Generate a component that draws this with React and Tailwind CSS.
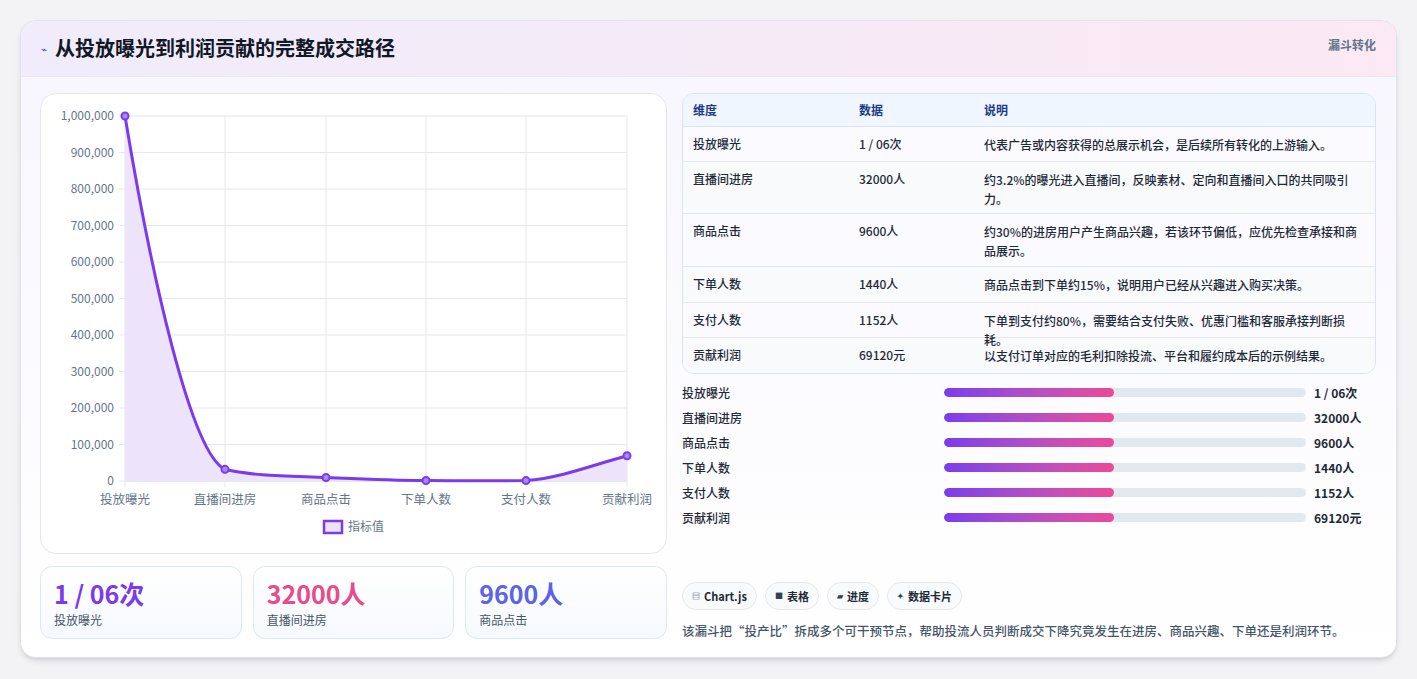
import React from "react";

const rows = [
  ["投放曝光", "1 / 06次", "代表广告或内容获得的总展示机会，是后续所有转化的上游输入。", "h-[35px]"],
  ["直播间进房", "32000人", "约3.2%的曝光进入直播间，反映素材、定向和直播间入口的共同吸引力。", "h-[52px]"],
  ["商品点击", "9600人", "约30%的进房用户产生商品兴趣，若该环节偏低，应优先检查承接和商品展示。", "h-[53px]"],
  ["下单人数", "1440人", "商品点击到下单约15%，说明用户已经从兴趣进入购买决策。", "h-[36px]"],
  ["支付人数", "1152人", "下单到支付约80%，需要结合支付失败、优惠门槛和客服承接判断损耗。", "h-[35px]"],
  ["贡献利润", "69120元", "以支付订单对应的毛利扣除投流、平台和履约成本后的示例结果。", "h-[35px]"],
];

const xs = [84, 184, 285, 385, 485, 586];
const vals = [1000000, 32000, 9600, 1440, 1152, 69120];
const ys = vals.map((v) => 387 - (v / 1e6) * 365);

function Chart() {
  const yl = ["1,000,000", "900,000", "800,000", "700,000", "600,000", "500,000", "400,000", "300,000", "200,000", "100,000", "0"];
  const labels = ["投放曝光", "直播间进房", "商品点击", "下单人数", "支付人数", "贡献利润"];
  const line = `M84,${ys[0]} C110,180 150,360 184,${ys[1]} C210,382 250,382 285,${ys[2]} C320,385 350,386.5 385,${ys[3]} C420,387 450,387 485,${ys[4]} C520,384 555,370 586,${ys[5]}`;
  return (
    <svg width="627" height="461" className="block" style={{ fontFamily: "'Noto Sans CJK SC', sans-serif" }}>
      {yl.map((t, i) => {
        const y = 22 + i * 36.5;
        return (
          <g key={i}>
            <line x1="84" x2="586" y1={y} y2={y} stroke={i === 10 ? "#cbd5e1" : "#e5e7eb"} strokeWidth="1" />
            <line x1="78" x2="84" y1={y} y2={y} stroke="#e5e7eb" />
            <text x="73" y={y + 4} textAnchor="end" fontSize="12" fill="#64748b">{t}</text>
          </g>
        );
      })}
      {xs.map((x, i) => (
        <g key={i}>
          <line x1={x} x2={x} y1="22" y2="393" stroke="#e5e7eb" />
          <text x={x} y="410" textAnchor="middle" fontSize="12.5" fill="#64748b">{labels[i]}</text>
        </g>
      ))}
      <path d={`${line} L586,387 L84,387 Z`} fill="#ede4fb" />
      <path d={line} fill="none" stroke="#7c3aed" strokeWidth="3" />
      {xs.map((x, i) => (
        <circle key={i} cx={x} cy={ys[i]} r="3.5" fill="#a78bfa" stroke="#7c3aed" strokeWidth="2" />
      ))}
      <rect x="283" y="427" width="18" height="12" fill="#ede4fb" stroke="#7c3aed" strokeWidth="2.5" />
      <text x="307" y="437" fontSize="12" fill="#64748b">指标值</text>
    </svg>
  );
}

export default function App() {
  return (
    <div className="min-h-[679px] bg-[#f3f3f6] pt-5 pl-5" style={{ fontFamily: "'Noto Sans CJK SC', 'Noto Sans', sans-serif" }}>
      <div className="w-[1377px] h-[638px] bg-white rounded-2xl border border-[#e3e0f0] shadow-md overflow-hidden">
        <div className="h-[56px] bg-gradient-to-r from-[#f0ecfb] to-[#fbe9f3] border-b border-[#ebe6f5] flex items-start justify-between px-5">
          <div className="flex items-center gap-2 mt-[12px]">
            <span className="text-[10px] text-[#4f46e5]">⌁</span>
            <span className="text-[20px] font-bold text-[#111827]">从投放曝光到利润贡献的完整成交路径</span>
          </div>
          <span className="text-[12px] font-semibold text-[#64748b] mt-[15px]">漏斗转化</span>
        </div>
        <div className="flex gap-[15px] pl-[19px] pr-5 pt-4 bg-gradient-to-b from-[#f8f6fe] to-white h-[581px]">
          <div className="w-[627px] flex flex-col gap-3">
            <div className="h-[461px] rounded-2xl border border-[#e5e7eb] bg-white overflow-hidden">
              <Chart />
            </div>
            <div className="flex gap-[11px]">
              {[["1 / 06次", "text-[#7c3aed]", "投放曝光"], ["32000人", "text-[#e84a8c]", "直播间进房"], ["9600人", "text-[#5b63e8]", "商品点击"]].map(([v, c, l]) => (
                <div key={l} className="w-[202px] h-[73px] rounded-xl border border-[#dde7f5] bg-gradient-to-b from-white to-[#f6f9fe] px-[13px] pt-[10px]">
                  <div className={`text-[25px] font-bold leading-[32px] ${c}`}>{v}</div>
                  <div className="text-[12px] text-[#475569] mt-[2px]">{l}</div>
                </div>
              ))}
            </div>
          </div>
          <div className="w-[695px] flex flex-col">
            <div className="rounded-xl border border-[#dbe3ee] overflow-hidden text-[12px]">
              <div className="flex h-[33px] items-center bg-[#eff6ff] border-b border-[#dbe3ee] text-[#1e3a8a] font-semibold">
                <div className="w-[176px] pl-[10px]">维度</div>
                <div className="w-[125px]">数据</div>
                <div className="flex-1">说明</div>
              </div>
              {rows.map(([a, b, c, h], i) => (
                <div key={a} className={`flex ${h} pt-[8px] ${i % 2 ? "bg-[#f8fafc]" : "bg-[#fbfbff]"} ${i < 5 ? "border-b border-[#e5e7eb]" : ""} text-[#1f2937]`}>
                  <div className="w-[176px] pl-[10px] font-medium">{a}</div>
                  <div className="w-[125px] font-medium">{b}</div>
                  <div className="flex-1 pr-2 leading-[19px] font-medium">{c}</div>
                </div>
              ))}
            </div>
            <div className="flex flex-col mt-[6px]">
              {rows.map(([a, b]) => (
                <div key={a} className="flex items-center h-[25px] text-[12px] font-medium text-[#1f2937]">
                  <div className="w-[262px]">{a}</div>
                  <div className="w-[362px] h-[9px] rounded-full bg-[#e2e8f0] overflow-hidden">
                    <div className="w-[170px] h-full rounded-full bg-gradient-to-r from-[#7c3aed] to-[#ec4899]" />
                  </div>
                  <div className="ml-2 font-semibold">{b}</div>
                </div>
              ))}
            </div>
            <div className="flex gap-2 mt-[52px]">
              {[["▤", "Chart.js"], ["■", "表格"], ["▰", "进度"], ["✦", "数据卡片"]].map(([i, t]) => (
                <span key={t} className="h-[28px] px-[9px] rounded-full border border-[#e5e7eb] bg-[#f8fafc] flex items-center gap-1 text-[11px] font-semibold text-[#1f2937]">
                  <span className="text-[8px] text-[#334155]">{i}</span>{t}
                </span>
              ))}
            </div>
            <div className="mt-[12px] text-[12.5px] text-[#475569] font-medium">该漏斗把“投产比”拆成多个可干预节点，帮助投流人员判断成交下降究竟发生在进房、商品兴趣、下单还是利润环节。</div>
          </div>
        </div>
      </div>
    </div>
  );
}
